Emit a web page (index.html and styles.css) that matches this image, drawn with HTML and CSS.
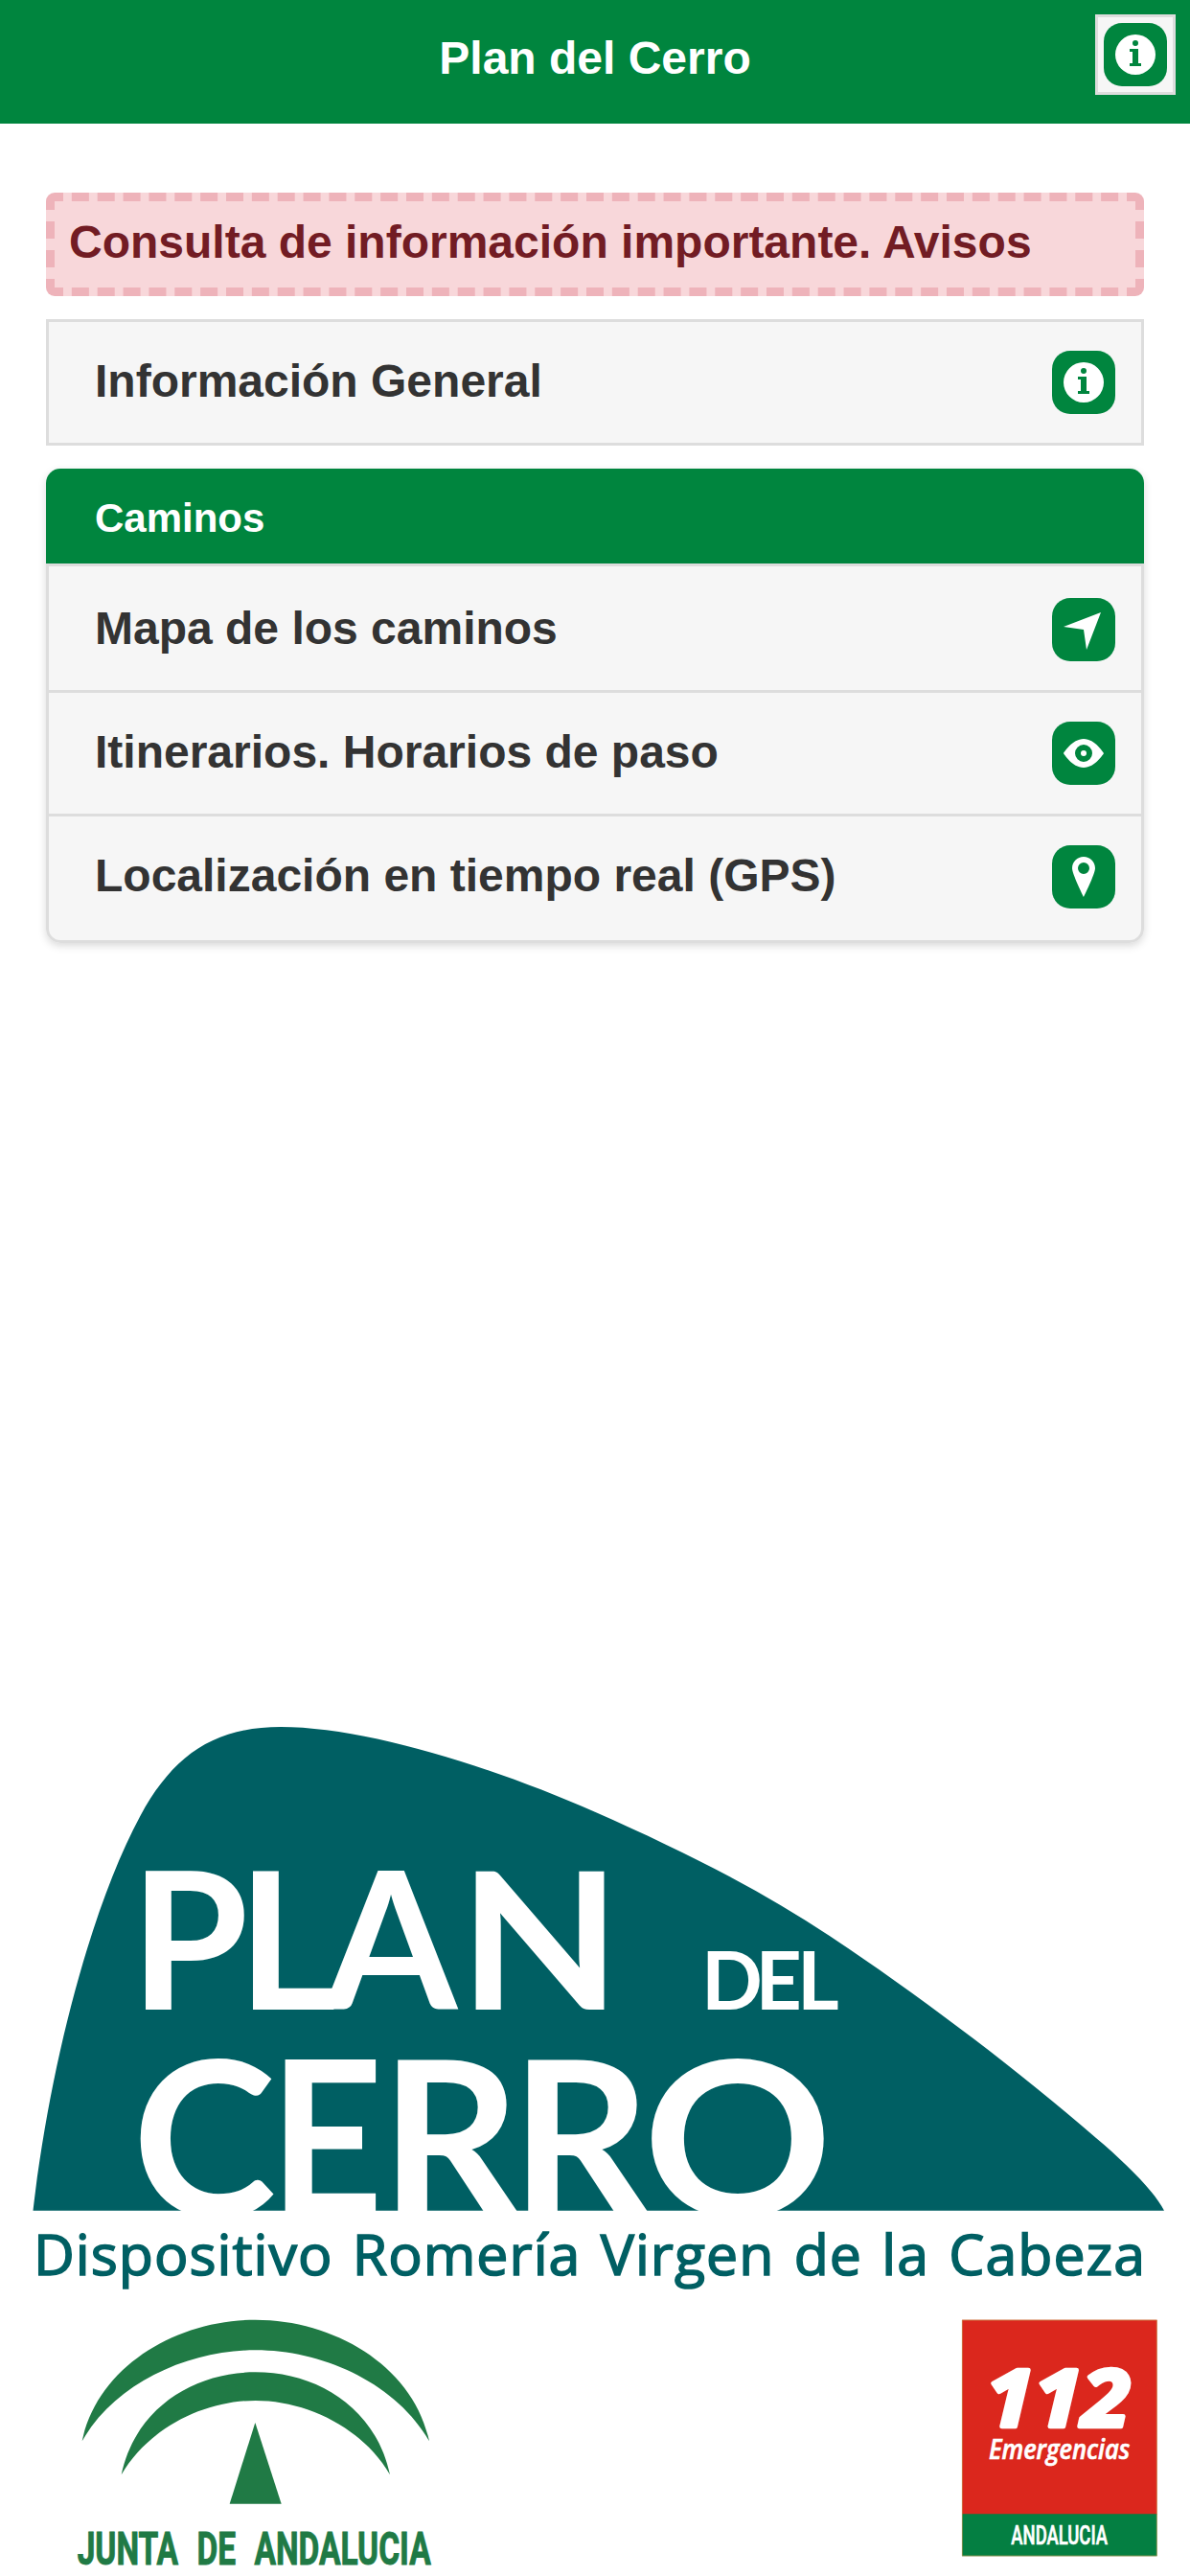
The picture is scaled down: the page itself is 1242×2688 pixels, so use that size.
FILE: index.html
```html
<!DOCTYPE html>
<html lang="es">
<head>
<meta charset="utf-8">
<title>Plan del Cerro</title>
<link rel="stylesheet" href="styles.css">
</head>
<body>
<header class="header">
  <h1 class="title">Plan del Cerro</h1>
  <a class="header-button">
    <span class="icon"><svg viewBox="0 0 14 14"><path d="M7 0a7 7 0 1 0 0 14A7 7 0 0 0 7 0zM7 2a1 1 0 1 1 0 2 1 1 0 0 1 0-2zM9 11H5v-1h1V6H5V5h3v5h1z"/></svg></span>
  </a>
</header>
<main class="content">
  <a class="alert">Consulta de información importante. Avisos</a>
  <a class="button">
    <span class="label">Información General</span>
    <span class="icon"><svg viewBox="0 0 14 14"><path d="M7 0a7 7 0 1 0 0 14A7 7 0 0 0 7 0zM7 2a1 1 0 1 1 0 2 1 1 0 0 1 0-2zM9 11H5v-1h1V6H5V5h3v5h1z"/></svg></span>
  </a>
  <section class="panel">
    <h2 class="panel-title">Caminos</h2>
    <ul class="list">
      <li class="row">
        <span class="label">Mapa de los caminos</span>
        <span class="icon"><svg viewBox="0 0 14 14"><path d="M13 1 0 6l7 1 1 7z"/></svg></span>
      </li>
      <li class="row">
        <span class="label">Itinerarios. Horarios de paso</span>
        <span class="icon"><svg viewBox="0 0 14 14"><path fill-rule="evenodd" d="M7 2C3 2 0 7 0 7s3 5 7 5 7-5 7-5-3-5-7-5zM7 4a3 3 0 1 1 0 6 3 3 0 0 1 0-6z"/><circle cx="7" cy="7" r="1"/></svg></span>
      </li>
      <li class="row">
        <span class="label">Localización en tiempo real (GPS)</span>
        <span class="icon"><svg viewBox="0 0 14 14"><path fill-rule="evenodd" d="M7 0C4.791 0 3 1.791 3 4c0 2 4 10 4 10s4-8 4-10c0-2.209-1.791-4-4-4zM7 6a2 2 0 1 1 0-4 2 2 0 0 1 0 4z"/></svg></span>
      </li>
    </ul>
  </section>
</main>
<footer class="footer">
  <svg class="hill" viewBox="0 1780 1242 620">
    <path class="hill-shape" d="M34.5 2306.7C52 2155 95 1990 146.5 1894.7C180 1833 222 1802 293 1802C380 1802 510 1842 621 1890.7C710 1930 790 1970 866.5 2020.4C960 2083 1060 2158 1144 2231C1175 2257 1205 2287 1215 2306.7Z"/>
    <g class="hill-text">
      <text y="2096.5" font-size="199" x="136 248 339">PLA<tspan x="479" textLength="169" lengthAdjust="spacingAndGlyphs">N</tspan></text>
      <text y="2096.5" font-size="84" x="732 788.5 832">DEL</text>
      <text y="2313" font-size="227"><tspan x="138">C</tspan><tspan x="281" textLength="119" lengthAdjust="spacingAndGlyphs">E</tspan><tspan x="397 533">RR</tspan><tspan x="671" textLength="198" lengthAdjust="spacingAndGlyphs">O</tspan></text>
    </g>
    <text class="slogan" x="35" y="2374" textLength="1160">Dispositivo Romería Virgen de la Cabeza</text>
  </svg>
  <div class="logos">
    <svg class="junta" viewBox="0 30 1320 864">
      <path d="M137 472C185 240 430 92 680 92S1176 240 1224 472C1120 290 890 187 680 187S240 290 137 472z"/>
      <path d="M260 577C305 365 490 256 680 256S1056 365 1101 577C1016 430 840 345 680 345S345 430 260 577z"/>
      <path d="M679 414 599 668H761z"/>
      <text class="junta-text" x="122" y="857" textLength="1107" lengthAdjust="spacingAndGlyphs">JUNTA DE ANDALUCIA</text>
    </svg>
    <svg class="emergency" viewBox="0 30 786 864">
      <path class="red" d="M72 92H683V702H72z"/>
      <path class="green" d="M72 700H683V832H72z"/>
      <path class="edge" d="M73 93H682V831H73z"/>
      <text class="number" x="146" y="427" textLength="452" lengthAdjust="spacingAndGlyphs">112</text>
      <text class="word" x="156" y="529" textLength="442" lengthAdjust="spacingAndGlyphs">Emergencias</text>
      <text class="region" x="226" y="794" textLength="302" lengthAdjust="spacingAndGlyphs">ANDALUCIA</text>
    </svg>
  </div>
</footer>
</body>
</html>
```

FILE: styles.css
```css
* { box-sizing: border-box; }
body {
  margin: 0;
  min-height: 2688px;
  display: flex;
  flex-direction: column;
  background: #fff;
  color: #333;
  font: bold 48px/60px "Liberation Sans", Arial, sans-serif;
}
svg { display: block; }
.header {
  height: 129px;
  padding: 15px;
  display: grid;
  grid-template-columns: 1fr auto 1fr;
  align-items: start;
  background: #00853e;
}
.title {
  grid-column: 2;
  margin: 0;
  padding-top: 16px;
  color: #fff;
  font-size: 48px;
  line-height: 60px;
}
.header-button {
  justify-self: end;
  padding: 6px;
  border: 3px solid #ddd;
  background: #f6f6f6;
}
.icon {
  width: 66px;
  height: 66px;
  padding: 12px;
  display: block;
  border-radius: 19px;
  background: #00853e;
}
.icon svg {
  width: 42px;
  height: 42px;
  fill: #fff;
  fill-rule: evenodd;
}
.content {
  padding: 72px 48px 0;
  display: flex;
  flex-direction: column;
  gap: 24px;
}
.alert {
  height: 108px;
  padding: 13px 15px;
  border: 9px dashed #eeb3ba;
  border-radius: 9px;
  background: #f8d7da;
  color: #721c24;
}
.button {
  height: 132px;
  padding: 0 27px 0 48px;
  display: flex;
  align-items: center;
  justify-content: space-between;
  border: 3px solid #ddd;
  background: #f6f6f6;
}
.label { padding-bottom: 3px; }
.panel {
  border-radius: 15px;
  box-shadow: 0 3px 9px rgba(0, 0, 0, .15);
}
.panel-title {
  height: 99px;
  margin: 0;
  padding: 22px 51px;
  border-radius: 15px 15px 0 0;
  background: #00853e;
  color: #fff;
  font-size: 42px;
  line-height: 60px;
}
.list {
  margin: 0;
  padding: 0 0 3px;
  list-style: none;
  border: 3px solid #ddd;
  border-radius: 0 0 15px 15px;
  background: #f6f6f6;
}
.row {
  height: 129px;
  padding: 3px 27px 0 48px;
  display: flex;
  align-items: center;
  justify-content: space-between;
}
.row + .row {
  padding-top: 0;
  border-top: 3px solid #ddd;
}
.footer { margin-top: auto; }
.hill {
  width: 1242px;
  height: 620px;
}
.hill-shape { fill: #005f63; }
.hill-text {
  fill: #fff;
  font-family: Lato, sans-serif;
  font-weight: bold;
}
.slogan {
  fill: #005f63;
  stroke: #005f63;
  stroke-width: 1.6;
  font: 59px "Open Sans", sans-serif;
  word-spacing: 4px;
}
.logos {
  height: 288px;
  padding-left: 40px;
  display: flex;
  justify-content: space-between;
}
.junta {
  width: 440px;
  height: 288px;
  fill: #207a45;
}
.junta-text {
  stroke: #207a45;
  stroke-width: 3;
  font: bold 146px Roboto, sans-serif;
  word-spacing: 48px;
}
.emergency {
  width: 262px;
  height: 288px;
}
.red { fill: #db271d; }
.green { fill: #047f42; }
.edge {
  fill: none;
  stroke: #c59a55;
  stroke-width: 2;
}
.number {
  fill: #fff;
  stroke: #fff;
  stroke-width: 14;
  stroke-linejoin: round;
  font: italic bold 250px "Open Sans", sans-serif;
}
.word {
  fill: #fff;
  stroke: #fff;
  stroke-width: 2;
  font: italic 600 84px "Open Sans", sans-serif;
}
.region {
  fill: #fff;
  stroke: #fff;
  stroke-width: 2;
  font: 500 82px Roboto, sans-serif;
}
```
